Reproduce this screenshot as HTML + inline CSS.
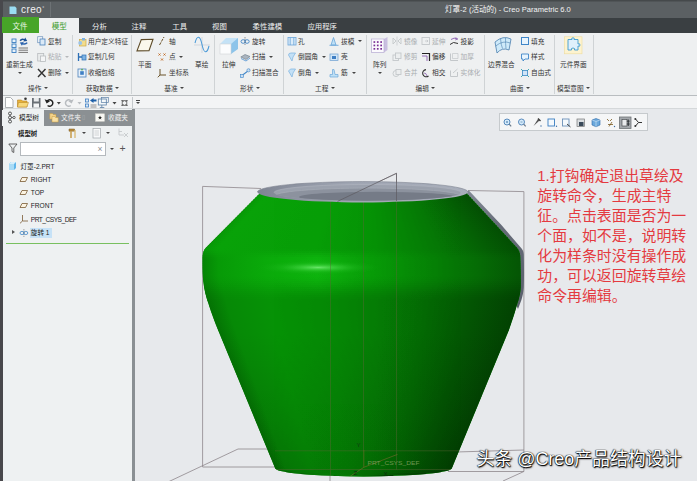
<!DOCTYPE html>
<html lang="zh"><head><meta charset="utf-8"><title>灯罩-2 - Creo Parametric 6.0</title>
<style>
html,body{margin:0;padding:0;}
body{width:697px;height:481px;overflow:hidden;background:#e7e9ec;font-family:"Liberation Sans","Noto Sans CJK SC",sans-serif;}
#app{position:relative;width:697px;height:481px;overflow:hidden;background:#e7e9ec;}
#app div,#app span,#app i,#app svg{position:absolute;display:block;}
.t{white-space:nowrap;font-family:"Liberation Sans","Noto Sans CJK SC",sans-serif;}
.ar{width:0;height:0;border-style:solid;border-color:transparent;}
</style></head><body><div id="app">
<div style="left:0px;top:0px;width:697px;height:481px;background:#e7e9ec;"></div>
<div style="left:0px;top:0px;width:697px;height:18px;background:linear-gradient(#45494b 0,#45494b 1px,#5b6063 2px,#5b6063 100%);"></div>
<div style="left:50px;top:2px;width:1px;height:15px;background:#6d7275;"></div>
<div style="left:0px;top:17.5px;width:697px;height:15.5px;background:#3a3f42;"></div>
<div style="left:0px;top:33px;width:697px;height:62px;background:#eef0f1;"></div>
<div style="left:0px;top:95px;width:697px;height:1px;background:#b9bdc0;"></div>
<div style="left:0px;top:96px;width:697px;height:13px;background:#f3f4f5;"></div>
<div style="left:0px;top:108px;width:697px;height:1px;background:#d5d8da;"></div>
<div style="left:0px;top:109px;width:133px;height:372px;background:#eef1f2;"></div>
<div style="left:132.2px;top:109px;width:2.5px;height:372px;background:#8a8f93;"></div>
<div style="left:0px;top:0px;width:2.5px;height:481px;background:#48484c;"></div>
<svg style="left:8px;top:5px" width="10" height="10" viewBox="0 0 10 10"><path d="M1.5 1.5 L7 1.5 L8.5 3 L8.5 9 L1.5 9 Z" fill="#9adcf2"/></svg>
<span class="t " style="left:21px;top:2.9px;font-size:10px;line-height:13.0px;color:#f2f2f2;letter-spacing:0.4px">creo</span>
<span class="t " style="left:42.3px;top:4.5px;font-size:5px;line-height:6.5px;color:#e0e0e0;">°</span>
<span class="t " style="left:445px;top:4.9px;font-size:7.55px;line-height:9.8px;color:#f4f4f4;">灯罩-2 (活动的) - Creo Parametric 6.0</span>
<div style="left:2px;top:17px;width:37px;height:16px;background:#47a528;"></div>
<div style="left:39px;top:18px;width:40px;height:15px;background:#eef0f1;"></div>
<span class="t " style="left:12.5px;top:22.0px;font-size:7.5px;line-height:9.8px;color:#eaf6e4;">文件</span>
<span class="t " style="left:51.7px;top:22.0px;font-size:7.5px;line-height:9.8px;color:#3c9a2a;">模型</span>
<span class="t " style="left:92px;top:22.1px;font-size:7.4px;line-height:9.6px;color:#f0f0f0;">分析</span>
<span class="t " style="left:131.6px;top:22.1px;font-size:7.4px;line-height:9.6px;color:#f0f0f0;">注释</span>
<span class="t " style="left:172.3px;top:22.1px;font-size:7.4px;line-height:9.6px;color:#f0f0f0;">工具</span>
<span class="t " style="left:212px;top:22.1px;font-size:7.4px;line-height:9.6px;color:#f0f0f0;">视图</span>
<span class="t " style="left:252.6px;top:22.1px;font-size:7.4px;line-height:9.6px;color:#f0f0f0;">柔性建模</span>
<span class="t " style="left:307.4px;top:22.1px;font-size:7.4px;line-height:9.6px;color:#f0f0f0;">应用程序</span>
<div style="left:72px;top:35px;width:1px;height:59px;background:#cfd3d5;"></div>
<div style="left:131px;top:35px;width:1px;height:59px;background:#cfd3d5;"></div>
<div style="left:214px;top:35px;width:1px;height:59px;background:#cfd3d5;"></div>
<div style="left:283px;top:35px;width:1px;height:59px;background:#cfd3d5;"></div>
<div style="left:366px;top:35px;width:1px;height:59px;background:#cfd3d5;"></div>
<div style="left:484px;top:35px;width:1px;height:59px;background:#cfd3d5;"></div>
<div style="left:554px;top:35px;width:1px;height:59px;background:#cfd3d5;"></div>
<div style="left:593px;top:35px;width:1px;height:59px;background:#cfd3d5;"></div>
<svg style="left:10.5px;top:36.5px" width="20" height="17" viewBox="0 0 20 17"><rect x="1" y="2" width="4" height="3.5" fill="#e8f3fb" stroke="#3a7dc0" stroke-width="0.9"/><rect x="1" y="7" width="4" height="3.5" fill="#e8f3fb" stroke="#3a7dc0" stroke-width="0.9"/><rect x="1" y="12" width="4" height="3.5" fill="#e8f3fb" stroke="#3a7dc0" stroke-width="0.9"/><path d="M8.5 3.2 Q10.5 0.8 13.5 2 L14.2 0.6 L16.2 4 L12.3 4.6 L13 3.2 Q11 2.6 9.8 4.2Z" fill="#1a4f94"/><path d="M16.8 6 Q14.8 8.6 11.6 7.4 L10.9 8.8 L8.8 5.4 L12.8 4.9 L12.1 6.2 Q14.2 6.8 15.5 5.2Z" fill="#2a63ae"/><path d="M7.5 11 H17 M7.5 13.2 H17 M7.5 15.4 H17" stroke="#666" stroke-width="0.9"/></svg>
<span class="t " style="left:6px;top:61.0px;font-size:6.7px;line-height:8.7px;color:#333;">重新生成</span>
<i class="ar" style="left:17.5px;top:72px;border-top-color:#444;border-width:2.5px 2.0px 0 2.0px"></i>
<svg style="left:37px;top:36px" width="9" height="10" viewBox="0 0 9 10"><rect x="0.7" y="0.7" width="5" height="6" fill="#f4f8fb" stroke="#7a9cc0" stroke-width="0.8"/><rect x="3" y="3" width="5" height="6" fill="#dbe9f6" stroke="#4d82bb" stroke-width="0.8"/></svg>
<span class="t " style="left:48px;top:37.7px;font-size:6.7px;line-height:8.7px;color:#333;">复制</span>
<svg style="left:37px;top:52px" width="9" height="10" viewBox="0 0 9 10"><rect x="0.7" y="1.5" width="6" height="7.5" fill="#e9ebec" stroke="#b8bcbf" stroke-width="0.8"/><rect x="3.5" y="4" width="5" height="5.5" fill="#f4f5f6" stroke="#b8bcbf" stroke-width="0.8"/></svg>
<span class="t " style="left:48px;top:53.4px;font-size:6.7px;line-height:8.7px;color:#a9adb0;">粘贴</span>
<i class="ar" style="left:64.5px;top:56px;border-top-color:#b5b8bb;border-width:2.5px 2.0px 0 2.0px"></i>
<svg style="left:37px;top:67.5px" width="10" height="10" viewBox="0 0 10 10"><path d="M1 1 L8.5 9 M8.5 1 L1 9" stroke="#333" stroke-width="1.4" fill="none"/></svg>
<span class="t " style="left:48px;top:69.0px;font-size:6.7px;line-height:8.7px;color:#333;">删除</span>
<i class="ar" style="left:64.5px;top:71.6px;border-top-color:#444;border-width:2.5px 2.0px 0 2.0px"></i>
<span class="t " style="left:28px;top:84.5px;font-size:6.7px;line-height:8.7px;color:#333;">操作</span>
<i class="ar" style="left:43.9px;top:87px;border-top-color:#444;border-width:2.5px 2.0px 0 2.0px"></i>
<svg style="left:77.3px;top:36.8px" width="10" height="10" viewBox="0 0 10 10"><rect x="2.5" y="2.5" width="6.5" height="6.5" fill="#f3dc8c" stroke="#c9aa4c" stroke-width="0.7"/><circle cx="3.2" cy="6" r="2" fill="#9cc4ea"/><rect x="5" y="1" width="3" height="2.5" fill="#7fb2e2"/></svg>
<span class="t " style="left:88px;top:37.7px;font-size:6.7px;line-height:8.7px;color:#333;">用户定义特征</span>
<svg style="left:77.3px;top:52px" width="10" height="10" viewBox="0 0 10 10"><path d="M1.5 1 V9 M1.5 5 H5" stroke="#2d6fb5" stroke-width="1.3" fill="none"/><rect x="5" y="3" width="4" height="5" fill="#7fb2e2" stroke="#2d6fb5" stroke-width="0.7"/></svg>
<span class="t " style="left:88px;top:53.4px;font-size:6.7px;line-height:8.7px;color:#333;">复制几何</span>
<svg style="left:77.3px;top:67.5px" width="10" height="10" viewBox="0 0 10 10"><rect x="1" y="1" width="8" height="8" fill="#e6f0fa" stroke="#4d82bb" stroke-width="0.8"/><rect x="3.2" y="3.2" width="3.6" height="3.6" fill="#3f7fc4"/><path d="M5 0.5 L6.2 2.2 H3.8Z" fill="#46a52a"/></svg>
<span class="t " style="left:88px;top:69.0px;font-size:6.7px;line-height:8.7px;color:#333;">收缩包络</span>
<span class="t " style="left:86px;top:84.5px;font-size:6.7px;line-height:8.7px;color:#333;">获取数据</span>
<i class="ar" style="left:115.3px;top:87px;border-top-color:#444;border-width:2.5px 2.0px 0 2.0px"></i>
<svg style="left:134px;top:36px" width="21" height="18" viewBox="0 0 21 18"><path d="M7.3 3.6 L19 3.3 L15 14.6 L3 14.9 Z" fill="#fbf8ec" stroke="#5e4c2a" stroke-width="1.1"/></svg>
<span class="t " style="left:138px;top:61.0px;font-size:6.7px;line-height:8.7px;color:#333;">平面</span>
<svg style="left:158px;top:36px" width="8" height="10" viewBox="0 0 8 10"><path d="M1.5 9 L6 1" stroke="#6a5228" stroke-width="1" stroke-dasharray="3 1"/></svg>
<span class="t " style="left:169px;top:37.7px;font-size:6.7px;line-height:8.7px;color:#333;">轴</span>
<svg style="left:157px;top:52px" width="10" height="10" viewBox="0 0 10 10"><path d="M1.5 1.5 L3.5 3.5 M3.5 1.5 L1.5 3.5 M6.5 1.5 L8.5 3.5 M8.5 1.5 L6.5 3.5 M4 6.5 L6 8.5 M6 6.5 L4 8.5" stroke="#c0641a" stroke-width="0.9"/></svg>
<span class="t " style="left:169px;top:53.4px;font-size:6.7px;line-height:8.7px;color:#333;">点</span>
<i class="ar" style="left:179.0px;top:56px;border-top-color:#444;border-width:2.5px 2.0px 0 2.0px"></i>
<svg style="left:157px;top:67.5px" width="10" height="10" viewBox="0 0 10 10"><path d="M3 1 V7 H9 M3 7 L0.8 9.3" stroke="#6a5228" stroke-width="1" fill="none"/></svg>
<span class="t " style="left:169px;top:69.0px;font-size:6.7px;line-height:8.7px;color:#333;">坐标系</span>
<svg style="left:193px;top:36px" width="18" height="18" viewBox="0 0 18 18"><path d="M1 9 H17 M9 1 V17" stroke="#c5cdd6" stroke-width="0.7"/><path d="M2 7 C4 -1,7 -1,9 8.5 S14 18,16 10" fill="none" stroke="#4a9ad8" stroke-width="1.05"/></svg>
<span class="t " style="left:195px;top:61.0px;font-size:6.7px;line-height:8.7px;color:#333;">草绘</span>
<span class="t " style="left:164.3px;top:84.5px;font-size:6.7px;line-height:8.7px;color:#333;">基准</span>
<i class="ar" style="left:180.20000000000002px;top:87px;border-top-color:#444;border-width:2.5px 2.0px 0 2.0px"></i>
<svg style="left:219px;top:36px" width="20" height="19" viewBox="0 0 20 19"><path d="M7 2 H19 V13 L12 18 V8 Z" fill="#8cc4ea"/><path d="M7 2 H19 L12 8 H1 Z" fill="#c4e2f6"/><rect x="1" y="8" width="11" height="10" fill="#fbfcfd" stroke="#d0d4d8" stroke-width="0.6"/></svg>
<span class="t " style="left:222px;top:61.0px;font-size:6.7px;line-height:8.7px;color:#333;">拉伸</span>
<svg style="left:240px;top:36px" width="10" height="10" viewBox="0 0 10 10"><ellipse cx="3.2" cy="5.5" rx="2.2" ry="1.8" fill="none" stroke="#3f86c8" stroke-width="0.9"/><ellipse cx="7" cy="5.5" rx="2.2" ry="1.8" fill="none" stroke="#3f86c8" stroke-width="0.9"/><path d="M5 1 V9" stroke="#555" stroke-width="0.6" stroke-dasharray="1.5 0.8"/></svg>
<span class="t " style="left:252px;top:37.7px;font-size:6.7px;line-height:8.7px;color:#333;">旋转</span>
<svg style="left:240px;top:52px" width="11" height="10" viewBox="0 0 11 10"><path d="M0.8 5 L5 2.5 L10 4.5 L6 7.5 Z" fill="#a9b4bf" stroke="#6c7884" stroke-width="0.6"/><path d="M1 6.5 L6 9 L10 6" fill="none" stroke="#5d9bd6" stroke-width="0.9"/></svg>
<span class="t " style="left:252px;top:53.4px;font-size:6.7px;line-height:8.7px;color:#333;">扫描</span>
<i class="ar" style="left:269.0px;top:56px;border-top-color:#444;border-width:2.5px 2.0px 0 2.0px"></i>
<svg style="left:240px;top:67.5px" width="11" height="10" viewBox="0 0 11 10"><path d="M1 9 C3 5,6 6,9.5 1" fill="none" stroke="#3f86c8" stroke-width="1.2"/><rect x="0.6" y="6.5" width="3" height="3" fill="#c9def2" stroke="#3f86c8" stroke-width="0.6"/><circle cx="8.5" cy="2.3" r="1.6" fill="#c9def2" stroke="#3f86c8" stroke-width="0.6"/></svg>
<span class="t " style="left:252px;top:69.0px;font-size:6.7px;line-height:8.7px;color:#333;">扫描混合</span>
<span class="t " style="left:240px;top:84.5px;font-size:6.7px;line-height:8.7px;color:#333;">形状</span>
<i class="ar" style="left:255.89999999999998px;top:87px;border-top-color:#444;border-width:2.5px 2.0px 0 2.0px"></i>
<svg style="left:287px;top:36px" width="10" height="10" viewBox="0 0 10 10"><rect x="1" y="1.5" width="8" height="7.5" fill="#dcecf9" stroke="#6ba6d9" stroke-width="0.8"/><path d="M3.2 1.5 V9 M6.8 1.5 V9" stroke="#6ba6d9" stroke-width="0.8"/></svg>
<span class="t " style="left:298px;top:37.7px;font-size:6.7px;line-height:8.7px;color:#333;">孔</span>
<svg style="left:287px;top:52px" width="10" height="10" viewBox="0 0 10 10"><path d="M1.5 3 Q1.5 1,4 1 H8.5 L6 5 L5 9 Z" fill="#c3e0f6" stroke="#7ab2e0" stroke-width="0.7"/></svg>
<span class="t " style="left:298px;top:53.4px;font-size:6.7px;line-height:8.7px;color:#333;">倒圆角</span>
<i class="ar" style="left:321.5px;top:56px;border-top-color:#444;border-width:2.5px 2.0px 0 2.0px"></i>
<svg style="left:287px;top:67.5px" width="10" height="10" viewBox="0 0 10 10"><path d="M1.5 3 L3.5 1 H8.5 L6 5 L5 9 Z" fill="#c3e0f6" stroke="#7ab2e0" stroke-width="0.7"/></svg>
<span class="t " style="left:298px;top:69.0px;font-size:6.7px;line-height:8.7px;color:#333;">倒角</span>
<i class="ar" style="left:315.0px;top:71.6px;border-top-color:#444;border-width:2.5px 2.0px 0 2.0px"></i>
<svg style="left:329px;top:36px" width="10" height="10" viewBox="0 0 10 10"><path d="M2 9 L4.5 1.5 L7 9 Z" fill="#bfe0f6" stroke="#6ba6d9" stroke-width="0.8"/><path d="M0.5 9.3 H9.5" stroke="#6ba6d9" stroke-width="0.9"/></svg>
<span class="t " style="left:341px;top:37.7px;font-size:6.7px;line-height:8.7px;color:#333;">拔模</span>
<i class="ar" style="left:358.0px;top:40px;border-top-color:#444;border-width:2.5px 2.0px 0 2.0px"></i>
<svg style="left:329px;top:52px" width="10" height="10" viewBox="0 0 10 10"><rect x="1" y="2" width="8" height="6.5" fill="#d3e6f6" stroke="#6b9fd0" stroke-width="0.7"/><rect x="3" y="4" width="4" height="3" fill="#3f7fc4"/></svg>
<span class="t " style="left:341px;top:53.4px;font-size:6.7px;line-height:8.7px;color:#333;">壳</span>
<svg style="left:329px;top:67.5px" width="10" height="10" viewBox="0 0 10 10"><path d="M1 9 H9 V6.5 H6 L5 1.5 H3.5 V6.5 H1 Z" fill="#bfe0f6" stroke="#6ba6d9" stroke-width="0.7"/></svg>
<span class="t " style="left:341px;top:69.0px;font-size:6.7px;line-height:8.7px;color:#333;">筋</span>
<i class="ar" style="left:352.0px;top:71.6px;border-top-color:#444;border-width:2.5px 2.0px 0 2.0px"></i>
<span class="t " style="left:315px;top:84.5px;font-size:6.7px;line-height:8.7px;color:#333;">工程</span>
<i class="ar" style="left:330.9px;top:87px;border-top-color:#444;border-width:2.5px 2.0px 0 2.0px"></i>
<svg style="left:370px;top:36px" width="19" height="19" viewBox="0 0 19 19"><path d="M1.5 3 H14 L17.5 1 V14 L14 16.5 H1.5 Z" fill="#c9bfe0"/><rect x="1.5" y="3" width="12.5" height="13.5" fill="#fbfafd" stroke="#b9aed3" stroke-width="0.7"/><g transform="translate(0.3,2)"><rect x="3.2" y="3.2" width="1.7" height="1.7" fill="#7a2f95"/><rect x="3.2" y="6.6" width="1.7" height="1.7" fill="#7a2f95"/><rect x="3.2" y="10.0" width="1.7" height="1.7" fill="#7a2f95"/><rect x="6.6" y="3.2" width="1.7" height="1.7" fill="#7a2f95"/><rect x="6.6" y="6.6" width="1.7" height="1.7" fill="#7a2f95"/><rect x="6.6" y="10.0" width="1.7" height="1.7" fill="#7a2f95"/><rect x="10.0" y="3.2" width="1.7" height="1.7" fill="#7a2f95"/><rect x="10.0" y="6.6" width="1.7" height="1.7" fill="#7a2f95"/><rect x="10.0" y="10.0" width="1.7" height="1.7" fill="#7a2f95"/></g></svg>
<span class="t " style="left:373px;top:61.0px;font-size:6.7px;line-height:8.7px;color:#333;">阵列</span>
<i class="ar" style="left:377.5px;top:72px;border-top-color:#444;border-width:2.5px 2.0px 0 2.0px"></i>
<svg style="left:392px;top:36px" width="10" height="10" viewBox="0 0 10 10"><path d="M1 2 L4 5 L1 8 Z M9 2 L6 5 L9 8 Z" fill="none" stroke="#c3c7ca" stroke-width="0.9"/><path d="M5 0.5 V9.5" stroke="#c3c7ca" stroke-width="0.7"/></svg>
<span class="t " style="left:404px;top:37.7px;font-size:6.7px;line-height:8.7px;color:#a9adb0;">镜像</span>
<svg style="left:392px;top:52px" width="10" height="10" viewBox="0 0 10 10"><rect x="1" y="3" width="5.5" height="5.5" fill="none" stroke="#c3c7ca" stroke-width="0.9"/><rect x="3.5" y="1" width="5.5" height="5.5" fill="#eceeef" stroke="#c3c7ca" stroke-width="0.9"/></svg>
<span class="t " style="left:404px;top:53.4px;font-size:6.7px;line-height:8.7px;color:#a9adb0;">修剪</span>
<svg style="left:392px;top:67.5px" width="10" height="10" viewBox="0 0 10 10"><circle cx="4" cy="5.5" r="3" fill="none" stroke="#c3c7ca" stroke-width="0.9"/><rect x="4" y="1.5" width="5" height="5" fill="#eceeef" stroke="#c3c7ca" stroke-width="0.9"/></svg>
<span class="t " style="left:404px;top:69.0px;font-size:6.7px;line-height:8.7px;color:#a9adb0;">合并</span>
<svg style="left:421px;top:36px" width="10" height="10" viewBox="0 0 10 10"><rect x="1" y="1.5" width="7.5" height="7" fill="none" stroke="#c3c7ca" stroke-width="0.9"/><path d="M4 5 H7 M5.8 3.8 L7 5 L5.8 6.2" stroke="#c3c7ca" stroke-width="0.8" fill="none"/></svg>
<span class="t " style="left:432px;top:37.7px;font-size:6.7px;line-height:8.7px;color:#a9adb0;">延伸</span>
<svg style="left:421px;top:52px" width="10" height="10" viewBox="0 0 10 10"><path d="M1 1.5 H8.5 V9" fill="none" stroke="#222" stroke-width="1.2"/><path d="M1 4 H6 V9" fill="none" stroke="#8a5fb0" stroke-width="0.9"/></svg>
<span class="t " style="left:432px;top:53.4px;font-size:6.7px;line-height:8.7px;color:#333;">偏移</span>
<svg style="left:421px;top:67.5px" width="10" height="10" viewBox="0 0 10 10"><path d="M7.5 8 A3.6 3.6 0 1 1 5 1.6" fill="none" stroke="#333" stroke-width="1.1"/><path d="M3 5 Q5.5 5 6 8" fill="none" stroke="#8a5fb0" stroke-width="0.8"/></svg>
<span class="t " style="left:432px;top:69.0px;font-size:6.7px;line-height:8.7px;color:#333;">相交</span>
<svg style="left:449px;top:36px" width="10" height="10" viewBox="0 0 10 10"><path d="M1 8.5 Q4 5 9 7.5" fill="none" stroke="#333" stroke-width="1"/><path d="M2 3.5 Q5 1 8.5 3" fill="none" stroke="#8a5fb0" stroke-width="0.9"/><path d="M6.5 1.5 L8.7 3 L6.2 4" fill="none" stroke="#8a5fb0" stroke-width="0.8"/></svg>
<span class="t " style="left:460.5px;top:37.7px;font-size:6.7px;line-height:8.7px;color:#333;">投影</span>
<svg style="left:449px;top:52px" width="10" height="10" viewBox="0 0 10 10"><path d="M1.5 1.5 V8.5 H9" fill="none" stroke="#c3c7ca" stroke-width="1"/><path d="M3.5 1.5 H9 V6.5 H3.5Z" fill="none" stroke="#c3c7ca" stroke-width="0.7"/></svg>
<span class="t " style="left:460.5px;top:53.4px;font-size:6.7px;line-height:8.7px;color:#a9adb0;">加厚</span>
<svg style="left:449px;top:67.5px" width="10" height="10" viewBox="0 0 10 10"><path d="M1.5 2.5 V8.5 H8.5 V4 " fill="none" stroke="#c3c7ca" stroke-width="1"/><path d="M4 5 L8.5 1" stroke="#c3c7ca" stroke-width="0.9"/></svg>
<span class="t " style="left:460.5px;top:69.0px;font-size:6.7px;line-height:8.7px;color:#a9adb0;">实体化</span>
<span class="t " style="left:415.5px;top:84.8px;font-size:6.7px;line-height:8.7px;color:#333;">编辑</span>
<i class="ar" style="left:431.4px;top:87.3px;border-top-color:#444;border-width:2.5px 2.0px 0 2.0px"></i>
<svg style="left:493px;top:36px" width="20" height="18" viewBox="0 0 20 18"><path d="M2 6 Q10 -1 18 3 L16 14 Q9 11 4 17 Z" fill="#cfeaf9" stroke="#4a7fae" stroke-width="0.8"/><path d="M7.5 2.6 Q8 9 9.5 12.5 M12.5 1.9 Q12.5 8 13 12.7 M2.7 10 Q10 4 17.3 7" fill="none" stroke="#4a7fae" stroke-width="0.6"/></svg>
<span class="t " style="left:488px;top:61.0px;font-size:6.7px;line-height:8.7px;color:#333;">边界混合</span>
<svg style="left:520px;top:36px" width="10" height="10" viewBox="0 0 10 10"><rect x="1.5" y="1.5" width="7" height="7" fill="#e8f4fd" stroke="#3f86c8" stroke-width="1"/></svg>
<span class="t " style="left:531px;top:37.7px;font-size:6.7px;line-height:8.7px;color:#333;">填充</span>
<svg style="left:520px;top:52px" width="10" height="10" viewBox="0 0 10 10"><path d="M1.5 2 H8.5 V7 H5 L3 9 V7 H1.5Z" fill="#e8f4fd" stroke="#3f86c8" stroke-width="0.9"/></svg>
<span class="t " style="left:531px;top:53.4px;font-size:6.7px;line-height:8.7px;color:#333;">样式</span>
<svg style="left:520px;top:67.5px" width="10" height="10" viewBox="0 0 10 10"><rect x="2.5" y="2.5" width="5" height="5" fill="#cfe5f7" stroke="#3f86c8" stroke-width="0.8"/><path d="M1 1 L3 3 M9 1 L7 3 M1 9 L3 7 M9 9 L7 7" stroke="#2f9fb0" stroke-width="0.9"/></svg>
<span class="t " style="left:531px;top:69.0px;font-size:6.7px;line-height:8.7px;color:#333;">自由式</span>
<span class="t " style="left:510px;top:84.8px;font-size:6.7px;line-height:8.7px;color:#333;">曲面</span>
<i class="ar" style="left:525.9px;top:87.3px;border-top-color:#444;border-width:2.5px 2.0px 0 2.0px"></i>
<svg style="left:564px;top:36px" width="19" height="19" viewBox="0 0 19 19"><rect x="0.5" y="0.8" width="17.5" height="17" fill="#fdf3cf" stroke="#efdc9c" stroke-width="0.6"/><path d="M4 3.5 H8 Q7 1.8 9 1.8 Q11 1.8 10 3.5 H14 V8 Q16 7 16 9 Q16 11 14 10 V14 H10.5 Q11.3 12 9 12 Q6.8 12 7.5 14 H4 Z" fill="#dff0fb" stroke="#3d9ad0" stroke-width="0.9"/></svg>
<span class="t " style="left:560px;top:61.0px;font-size:6.7px;line-height:8.7px;color:#333;">元件界面</span>
<span class="t " style="left:557px;top:84.8px;font-size:6.7px;line-height:8.7px;color:#333;">模型意图</span>
<i class="ar" style="left:586.3px;top:87.3px;border-top-color:#444;border-width:2.5px 2.0px 0 2.0px"></i>
<svg style="left:4px;top:96px" width="130" height="13" viewBox="0 0 130 13"><path d="M1.5 1.5 H6.5 L9 4 V11.5 H1.5Z" fill="#fff" stroke="#9a9ea2" stroke-width="0.8"/><path d="M13.5 4 H17.5 L18.5 5 H23 V11 H13.5Z" fill="#e9b23c" stroke="#b5821e" stroke-width="0.6"/><path d="M14.5 6.5 H24.5 L22.8 11 H13.5Z" fill="#f7d77a" stroke="#b5821e" stroke-width="0.5"/><circle cx="21.5" cy="2.8" r="1.3" fill="#333"/><path d="M28 2 H36.5 V11.5 H28Z" fill="#6a7076"/><rect x="29.8" y="2" width="5" height="3.5" fill="#e8eaec"/><rect x="29.5" y="7.5" width="5.5" height="4" fill="#f4f5f6"/><g transform="translate(1.6 0)"><path d="M42 9.5 A3.2 3.2 0 1 0 41.2 5.5" fill="none" stroke="#222" stroke-width="1.5"/><path d="M39 3.2 L41 7.5 L44.4 5.2Z" fill="#222"/></g><g transform="translate(1.3 0)"><path d="M51.5 6 L55.5 6 L53.5 8.6Z" fill="#444"/></g><g transform="translate(1.7 0)"><path d="M65 9.5 A3.2 3.2 0 1 1 65.8 5.5" fill="none" stroke="#b8bcc0" stroke-width="1.5"/><path d="M68 3.2 L66 7.5 L62.6 5.2Z" fill="#b8bcc0"/></g><g transform="translate(1.0 0)"><path d="M72.5 6 L76.5 6 L74.5 8.6Z" fill="#b8bcc0"/></g><rect x="81.5" y="3" width="3" height="3" fill="#dbe9f6" stroke="#3f7fc4" stroke-width="0.8"/><rect x="81.5" y="8" width="3" height="3" fill="#dbe9f6" stroke="#3f7fc4" stroke-width="0.8"/><path d="M86 4.5 L89.5 2 V3.5 H92.5 V5.5 H89.5 V7Z" fill="#1c5fa8"/><path d="M86.5 9 H92.5 M86.5 11 H92.5" stroke="#777" stroke-width="0.8"/><g transform="translate(-3.2 0)"><rect x="97.5" y="3" width="8" height="6" fill="#f4f8fb" stroke="#5a7fa6" stroke-width="0.8"/><rect x="100.5" y="1.5" width="7" height="5" fill="none" stroke="#5a7fa6" stroke-width="0.7"/><path d="M101 9 V11.5 M99 11.5 H103.5" stroke="#5a7fa6" stroke-width="0.8"/></g><path d="M108.5 6 L112.5 6 L110.5 8.6Z" fill="#444"/><path d="M117.5 4 L119.5 6 M123.5 4 L121.5 6 M117.5 10 L119.5 8 M123.5 10 L121.5 8" stroke="#555" stroke-width="1"/><rect x="118.2" y="4.7" width="4.6" height="4.6" fill="none" stroke="#555" stroke-width="0.8"/></svg>
<div style="left:132px;top:97px;width:1px;height:11px;background:#c5c9cc;"></div>
<i class="ar" style="left:135.8px;top:101.5px;border-top-color:#444;border-width:2.7px 2.2px 0 2.2px"></i>
<div style="left:135.8px;top:100.3px;width:4.4px;height:0.9px;background:#444;"></div>
<div style="left:2px;top:110px;width:42px;height:16px;background:#eef1f2;"></div>
<div style="left:44px;top:110px;width:90.4px;height:16px;background:#8b9093;"></div>
<svg style="left:7px;top:111px" width="9" height="13" viewBox="0 0 9 13"><circle cx="3" cy="2.5" r="1.5" fill="none" stroke="#333" stroke-width="0.8"/><circle cx="3" cy="6.5" r="1.5" fill="none" stroke="#333" stroke-width="0.8"/><circle cx="3" cy="10.5" r="1.5" fill="none" stroke="#333" stroke-width="0.8"/><circle cx="7" cy="6.5" r="1.2" fill="none" stroke="#333" stroke-width="0.7"/><path d="M3 4 V5 M3 8 V9 M4.5 6.5 H5.8" stroke="#333" stroke-width="0.7"/></svg>
<span class="t " style="left:19px;top:114.0px;font-size:6.7px;line-height:8.7px;color:#222;">模型树</span>
<svg style="left:49px;top:112px" width="10" height="11" viewBox="0 0 10 11"><path d="M0.8 1.5 H3.5 L4.3 2.5 H7 V7 H0.8Z" fill="#f3d28a" stroke="#c79a3c" stroke-width="0.5"/><path d="M3 4.5 H5.7 L6.5 5.5 H9.2 V10 H3Z" fill="#f7dfa4" stroke="#c79a3c" stroke-width="0.5"/></svg>
<span class="t " style="left:61px;top:114.0px;font-size:6.7px;line-height:8.7px;color:#f2f2f2;">文件夹</span>
<span class="t" style="left:82px;top:113px;font-size:6px;line-height:8px;color:#a9adb0">▯</span>
<svg style="left:95px;top:113px" width="10" height="9" viewBox="0 0 10 9"><rect x="0.5" y="0.8" width="9" height="7.5" fill="#f8f8f4" stroke="#d8d8d0" stroke-width="0.5"/><path d="M5 2.6 L5.6 4 L7 4.1 L5.9 5 L6.3 6.4 L5 5.6 L3.7 6.4 L4.1 5 L3 4.1 L4.4 4Z" fill="#222"/></svg>
<span class="t " style="left:108px;top:114.0px;font-size:6.7px;line-height:8.7px;color:#f2f2f2;">收藏夹</span>
<span class="t " style="left:18px;top:129.7px;font-size:6.4px;line-height:8.3px;color:#222;font-weight:bold">模型树</span>
<svg style="left:67px;top:127px" width="11" height="12" viewBox="0 0 11 12"><path d="M2 2 H7.5 V4.2 H2Z" fill="#b98a3a" stroke="#7a5a20" stroke-width="0.5"/><path d="M4 4 V11" stroke="#c9a050" stroke-width="1.6"/><path d="M8 3 V11" stroke="#d8b870" stroke-width="1.3"/></svg>
<i class="ar" style="left:82.0px;top:132px;border-top-color:#444;border-width:2.5px 2.0px 0 2.0px"></i>
<svg style="left:92px;top:127px" width="10" height="12" viewBox="0 0 10 12"><rect x="1" y="1.5" width="7.5" height="9.5" fill="#f8f9fa" stroke="#a2a7ab" stroke-width="0.7"/><path d="M2.5 4 H7 M2.5 6 H7 M2.5 8 H7" stroke="#b5b9bc" stroke-width="0.6"/></svg>
<i class="ar" style="left:105.5px;top:132px;border-top-color:#444;border-width:2.5px 2.0px 0 2.0px"></i>
<svg style="left:116px;top:127px" width="13" height="12" viewBox="0 0 13 12"><path d="M3 1.5 V8 H8 M3 4.5 H6" fill="none" stroke="#c5c9cc" stroke-width="0.9"/><path d="M8 6 L12 10 M12 6 L8 10" stroke="#c5c9cc" stroke-width="0.9"/></svg>
<svg style="left:8px;top:143px" width="10" height="11" viewBox="0 0 10 11"><path d="M0.8 1 H9 L5.8 5 V9.5 L4 8.5 V5Z" fill="none" stroke="#444" stroke-width="0.8"/></svg>
<div style="left:19.5px;top:141.5px;width:86.7px;height:14.8px;background:#ffffff;box-sizing:border-box;border:1px solid #b4b9bd;"></div>
<span class="t " style="left:97.5px;top:143.8px;font-size:8.5px;line-height:11.1px;color:#8a8e92;">×</span>
<i class="ar" style="left:109.5px;top:148px;border-top-color:#444;border-width:2.5px 2.0px 0 2.0px"></i>
<span class="t " style="left:119.6px;top:142.3px;font-size:10.5px;line-height:13.7px;color:#555;">+</span>
<svg style="left:8px;top:161px" width="9" height="10" viewBox="0 0 9 10"><path d="M1 3 L3 1 H8 V7 L6 9 H1Z" fill="#5fb5ea"/><path d="M1 3 H6 V9 H1Z" fill="#a9dbf6"/><path d="M1 3 L3 1 H8 L6 3Z" fill="#d5eefb"/></svg>
<span class="t " style="left:20.5px;top:162.5px;font-size:6.6px;line-height:8.6px;color:#222;">灯罩-2.PRT</span>
<svg style="left:19px;top:175.7px" width="10" height="8" viewBox="0 0 10 8"><path d="M3 1.5 H8.5 L6.5 5.5 H1Z" fill="#fbf3e2" stroke="#7a5a34" stroke-width="0.8"/></svg>
<span class="t " style="left:30.8px;top:176.0px;font-size:6.6px;line-height:8.6px;color:#222;">RIGHT</span>
<svg style="left:19px;top:188.79999999999998px" width="10" height="8" viewBox="0 0 10 8"><path d="M3 1.5 H8.5 L6.5 5.5 H1Z" fill="#fbf3e2" stroke="#7a5a34" stroke-width="0.8"/></svg>
<span class="t " style="left:30.8px;top:189.1px;font-size:6.6px;line-height:8.6px;color:#222;">TOP</span>
<svg style="left:19px;top:201.89999999999998px" width="10" height="8" viewBox="0 0 10 8"><path d="M3 1.5 H8.5 L6.5 5.5 H1Z" fill="#fbf3e2" stroke="#7a5a34" stroke-width="0.8"/></svg>
<span class="t " style="left:30.8px;top:202.2px;font-size:6.6px;line-height:8.6px;color:#222;">FRONT</span>
<svg style="left:19px;top:214px" width="10" height="10" viewBox="0 0 10 10"><path d="M3.5 1 V7 H9 M3.5 7 L1 9.3" stroke="#7a5a34" stroke-width="0.8" fill="none"/></svg>
<span class="t " style="left:30.8px;top:215.5px;font-size:6.6px;line-height:8.6px;color:#222;letter-spacing:-0.5px">PRT_CSYS_DEF</span>
<i class="ar" style="left:11.5px;top:230.3px;border-width:2.3px 0 2.3px 3px;border-left-color:#555"></i>
<svg style="left:19px;top:228px" width="10" height="10" viewBox="0 0 10 10"><ellipse cx="3" cy="5" rx="2" ry="1.6" fill="none" stroke="#3f86c8" stroke-width="0.8"/><ellipse cx="6.8" cy="5" rx="2" ry="1.6" fill="none" stroke="#3f86c8" stroke-width="0.8"/><path d="M4.9 1 V9" stroke="#555" stroke-width="0.5" stroke-dasharray="1.5 0.8"/></svg>
<div style="left:30px;top:228px;width:22px;height:9.5px;background:#c6e2f7;"></div>
<span class="t " style="left:30.8px;top:229.2px;font-size:6.6px;line-height:8.6px;color:#222;">旋转 1</span>
<div style="left:6px;top:242.5px;width:123px;height:1px;background:#78c060;"></div>
<div style="left:499.3px;top:113px;width:148.7px;height:17.6px;background:#f5f6f7;box-sizing:border-box;border:1px solid #c6cacd;"></div>
<svg style="left:500px;top:113.5px" width="148" height="17" viewBox="0 0 148 17"><circle cx="7" cy="8" r="3" fill="#d6ebfa" stroke="#4a7fb5" stroke-width="0.9"/><path d="M6 8 H8 M7 7 V9" stroke="#3a6ea5" stroke-width="0.6"/><path d="M9.2 10.2 L11.2 12.4" stroke="#6a7a8a" stroke-width="1.2"/><circle cx="21.5" cy="8" r="3" fill="#d6ebfa" stroke="#4a7fb5" stroke-width="0.9"/><path d="M20.5 8 H22.5" stroke="#3a6ea5" stroke-width="0.6"/><path d="M23.7 10.2 L25.7 12.4" stroke="#6a7a8a" stroke-width="1.2"/><path d="M33.5 12 L39.5 6.5 L38 5 Z" fill="#555"/><path d="M38 4.5 L40.5 7" stroke="#333" stroke-width="1.2"/><circle cx="41" cy="12" r="0.7" fill="#3a6ea5"/><rect x="48" y="5" width="6.5" height="7" fill="#f4f9fd" stroke="#3a7dc0" stroke-width="0.9"/><circle cx="56.5" cy="12.2" r="0.7" fill="#3a6ea5"/><rect x="62.5" y="5" width="6.5" height="7" fill="#f4f9fd" stroke="#6c90b8" stroke-width="0.9"/><path d="M67 10 L70.5 13" stroke="#444" stroke-width="1"/><rect x="77" y="5" width="7.5" height="7.5" fill="#d9dde0" stroke="#777" stroke-width="0.7"/><rect x="79" y="8" width="4.5" height="4" fill="#3a4a5a"/><path d="M92 6 L96 4.5 L100 6 V11 L96 12.8 L92 11Z" fill="#6aa8dc" stroke="#2d6aa8" stroke-width="0.6"/><path d="M92 6 L96 7.5 L100 6 M96 7.5 V12.8" stroke="#d5e8f7" stroke-width="0.6" fill="none"/><path d="M107 5 L109 7 M112 5 L110 7 M108 10.5 L113 10.5 M109 12.5 L112 8" stroke="#7a5a20" stroke-width="0.8"/><circle cx="114.5" cy="12.5" r="0.7" fill="#3a6ea5"/><rect x="119.5" y="3" width="11.5" height="11.5" fill="#a3a7ab" stroke="#6f7478" stroke-width="0.8"/><rect x="122" y="5.5" width="5" height="6.5" fill="#e8eaec" stroke="#3a3e42" stroke-width="0.6"/><path d="M128.3 5.5 V12 M126.8 7.2 H129.6 M126.8 10 H129.6" stroke="#2e3235" stroke-width="0.9"/><path d="M135.5 5 L138.5 8.5 L135.5 12 M138.5 8.5 H142" stroke="#333" stroke-width="1" fill="none"/><circle cx="135.3" cy="5" r="1" fill="#333"/><circle cx="135.3" cy="12" r="1" fill="#333"/></svg>
<svg style="left:133px;top:109px" width="564" height="372" viewBox="133 109 564 372">
<defs>
<linearGradient id="gA" x1="0" x2="1" y1="0" y2="0">
 <stop offset="0" stop-color="#079807"/><stop offset="0.04" stop-color="#08a208"/><stop offset="0.35" stop-color="#079e07"/>
 <stop offset="0.54" stop-color="#069206"/><stop offset="0.75" stop-color="#057805"/><stop offset="0.9" stop-color="#045e04"/><stop offset="1" stop-color="#034e03"/>
</linearGradient>
<linearGradient id="gB" x1="0" x2="1" y1="0" y2="0">
 <stop offset="0" stop-color="#058405"/><stop offset="0.05" stop-color="#079a07"/><stop offset="0.2" stop-color="#0aaa0a"/>
 <stop offset="0.36" stop-color="#0eb40e"/><stop offset="0.53" stop-color="#089c08"/><stop offset="0.73" stop-color="#068006"/><stop offset="0.87" stop-color="#056b05"/><stop offset="1" stop-color="#045504"/>
</linearGradient>
<linearGradient id="gC" x1="0" x2="1" y1="0" y2="0">
 <stop offset="0" stop-color="#047204"/><stop offset="0.06" stop-color="#068906"/><stop offset="0.2" stop-color="#069206"/>
 <stop offset="0.4" stop-color="#058805"/><stop offset="0.55" stop-color="#057c05"/><stop offset="0.7" stop-color="#046a04"/><stop offset="0.85" stop-color="#035503"/><stop offset="1" stop-color="#024202"/>
</linearGradient>
<linearGradient id="gv" x1="0" x2="0" y1="190" y2="476" gradientUnits="userSpaceOnUse">
 <stop offset="0" stop-color="#003000" stop-opacity="0"/><stop offset="0.5" stop-color="#003000" stop-opacity="0"/><stop offset="1" stop-color="#002400" stop-opacity="0.2"/>
</linearGradient>
<radialGradient id="hl" cx="318" cy="267.5" r="1" gradientUnits="userSpaceOnUse" gradientTransform="translate(318 267.5) scale(62 7.5) translate(-318 -267.5)">
 <stop offset="0" stop-color="#74ec74" stop-opacity="0.9"/><stop offset="0.25" stop-color="#4fdc4f" stop-opacity="0.65"/><stop offset="0.6" stop-color="#2cc42c" stop-opacity="0.28"/><stop offset="1" stop-color="#10a810" stop-opacity="0"/>
</radialGradient>
<radialGradient id="hl2" cx="330" cy="267" r="1" gradientUnits="userSpaceOnUse" gradientTransform="translate(330 267) scale(150 12) translate(-330 -267)">
 <stop offset="0" stop-color="#20c020" stop-opacity="0.6"/><stop offset="0.5" stop-color="#14b014" stop-opacity="0.3"/><stop offset="1" stop-color="#08a008" stop-opacity="0"/>
</radialGradient>
<linearGradient id="rim" x1="258" x2="468" y1="0" y2="0" gradientUnits="userSpaceOnUse">
 <stop offset="0" stop-color="#7f8593"/><stop offset="0.15" stop-color="#8b919f"/><stop offset="0.45" stop-color="#a0a6b3"/><stop offset="1" stop-color="#a8aebb"/>
</linearGradient>
<linearGradient id="edge" x1="0" x2="0" y1="190" y2="305" gradientUnits="userSpaceOnUse"><stop offset="0" stop-color="#868c99"/><stop offset="0.3" stop-color="#666c78"/><stop offset="1" stop-color="#5a606c"/></linearGradient>
<clipPath id="bodyclip"><path d="M260 193 L205.5 248 C204 249.5,202.8 252.5,202.6 256 C202.3 264,202.5 274,203.2 281 C204 289,206 297,208.7 304.6 C211 312,214.5 321.5,218 330 L275 468 A88.5 8.5 0 0 0 452 468 L509 330 C512.5 320,515 312,517 305 C519 299,520.5 293,520.8 287.5 C521 278,520.8 266,520.3 256.3 C520 252.5,518.8 249.8,517.3 248 L466.5 193 Z"/></clipPath>
<clipPath id="holeclip"><ellipse cx="367.5" cy="192.6" rx="93.5" ry="8.1"/></clipPath>
</defs>
<!-- back bounding lines -->
<g fill="none" stroke="#8e868b" stroke-width="0.8">
<path d="M202.6 467 V186.4 L261 188.5"/>
<path d="M468 190.5 L523.9 191.6 V471.5 L503 481"/>
<path d="M337.5 201.4 L396.5 173.3 V200"/>
<path d="M168 482 L238 449 H280"/>
<path d="M202.6 467 H280"/>
<path d="M456 452 L523.9 450"/>
<path d="M448 471.5 H523.9"/>
<path d="M330 476 V481"/>
</g>
<!-- grey shell edge on right -->
<path d="M468.6 190.2 L501.4 225 L521.8 248.8 C523 250.3,523.6 252.3,523.8 254.5 C524.1 266,524.1 278,523.8 287.5 C523.5 292,522.6 296,521.4 300 L518 309 L514 300 L514 246 L466 193 Z" fill="url(#edge)"/>
<!-- body -->
<path d="M260 193 L205.5 248 C204 249.5,202.8 252.5,202.6 256 C202.3 264,202.5 274,203.2 281 C204 289,206 297,208.7 304.6 C211 312,214.5 321.5,218 330 L275 468 A88.5 8.5 0 0 0 452 468 L509 330 C512.5 320,515 312,517 305 C519 299,520.5 293,520.8 287.5 C521 278,520.8 266,520.3 256.3 C520 252.5,518.8 249.8,517.3 248 L466.5 193 Z" fill="#0a880a"/>
<g clip-path="url(#bodyclip)">
<g><rect x="259.0" y="193" width="208.4" height="2.3" fill="url(#gA)"/><rect x="257.0" y="195" width="212.2" height="2.3" fill="url(#gA)"/><rect x="255.0" y="197" width="216.1" height="2.3" fill="url(#gA)"/><rect x="253.1" y="199" width="219.9" height="2.3" fill="url(#gA)"/><rect x="251.1" y="201" width="223.7" height="2.3" fill="url(#gA)"/><rect x="249.1" y="203" width="227.6" height="2.3" fill="url(#gA)"/><rect x="247.1" y="205" width="231.4" height="2.3" fill="url(#gA)"/><rect x="245.1" y="207" width="235.2" height="2.3" fill="url(#gA)"/><rect x="243.2" y="209" width="239.0" height="2.3" fill="url(#gA)"/><rect x="241.2" y="211" width="242.9" height="2.3" fill="url(#gA)"/><rect x="239.2" y="213" width="246.7" height="2.3" fill="url(#gA)"/><rect x="237.2" y="215" width="250.5" height="2.3" fill="url(#gA)"/><rect x="235.2" y="217" width="254.4" height="2.3" fill="url(#gA)"/><rect x="233.2" y="219" width="258.2" height="2.3" fill="url(#gA)"/><rect x="231.3" y="221" width="262.0" height="2.3" fill="url(#gA)"/><rect x="229.3" y="223" width="265.9" height="2.3" fill="url(#gA)"/><rect x="227.3" y="225" width="269.7" height="2.3" fill="url(#gA)"/><rect x="225.3" y="227" width="273.5" height="2.3" fill="url(#gA)"/><rect x="223.3" y="229" width="277.3" height="2.3" fill="url(#gA)"/><rect x="221.4" y="231" width="281.2" height="2.3" fill="url(#gA)"/><rect x="219.4" y="233" width="285.0" height="2.3" fill="url(#gA)"/><rect x="217.4" y="235" width="288.8" height="2.3" fill="url(#gA)"/><rect x="215.4" y="237" width="292.7" height="2.3" fill="url(#gA)"/><rect x="213.4" y="239" width="296.5" height="2.3" fill="url(#gA)"/><rect x="211.4" y="241" width="300.3" height="2.3" fill="url(#gA)"/><rect x="209.5" y="243" width="304.1" height="2.3" fill="url(#gA)"/><rect x="207.5" y="245" width="308.0" height="2.3" fill="url(#gA)"/><rect x="205.5" y="247" width="311.8" height="2.3" fill="url(#gA)"/><rect x="205.5" y="247" width="311.8" height="2.3" fill="url(#gB)" opacity="0.00"/><rect x="204.1" y="249" width="314.5" height="2.3" fill="url(#gA)"/><rect x="204.1" y="249" width="314.5" height="2.3" fill="url(#gB)" opacity="0.07"/><rect x="203.3" y="251" width="316.2" height="2.3" fill="url(#gA)"/><rect x="203.3" y="251" width="316.2" height="2.3" fill="url(#gB)" opacity="0.26"/><rect x="202.8" y="253" width="317.2" height="2.3" fill="url(#gA)"/><rect x="202.8" y="253" width="317.2" height="2.3" fill="url(#gB)" opacity="0.50"/><rect x="202.6" y="255" width="317.7" height="2.3" fill="url(#gA)"/><rect x="202.6" y="255" width="317.7" height="2.3" fill="url(#gB)" opacity="0.74"/><rect x="202.5" y="257" width="317.8" height="2.3" fill="url(#gA)"/><rect x="202.5" y="257" width="317.8" height="2.3" fill="url(#gB)" opacity="0.93"/><rect x="202.5" y="259" width="318.0" height="2.3" fill="url(#gB)"/><rect x="202.5" y="261" width="318.1" height="2.3" fill="url(#gB)"/><rect x="202.5" y="263" width="318.2" height="2.3" fill="url(#gB)"/><rect x="202.5" y="265" width="318.2" height="2.3" fill="url(#gB)"/><rect x="202.5" y="267" width="318.2" height="2.3" fill="url(#gB)"/><rect x="202.6" y="269" width="318.2" height="2.3" fill="url(#gB)"/><rect x="202.6" y="271" width="318.2" height="2.3" fill="url(#gB)"/><rect x="202.7" y="273" width="318.1" height="2.3" fill="url(#gB)"/><rect x="202.7" y="273" width="318.1" height="2.3" fill="url(#gC)" opacity="0.00"/><rect x="202.8" y="275" width="318.1" height="2.3" fill="url(#gB)"/><rect x="202.8" y="275" width="318.1" height="2.3" fill="url(#gC)" opacity="0.01"/><rect x="202.9" y="277" width="317.9" height="2.3" fill="url(#gB)"/><rect x="202.9" y="277" width="317.9" height="2.3" fill="url(#gC)" opacity="0.06"/><rect x="203.1" y="279" width="317.8" height="2.3" fill="url(#gB)"/><rect x="203.1" y="279" width="317.8" height="2.3" fill="url(#gC)" opacity="0.12"/><rect x="203.3" y="281" width="317.6" height="2.3" fill="url(#gB)"/><rect x="203.3" y="281" width="317.6" height="2.3" fill="url(#gC)" opacity="0.20"/><rect x="203.6" y="283" width="317.3" height="2.3" fill="url(#gB)"/><rect x="203.6" y="283" width="317.3" height="2.3" fill="url(#gC)" opacity="0.29"/><rect x="203.9" y="285" width="317.0" height="2.3" fill="url(#gB)"/><rect x="203.9" y="285" width="317.0" height="2.3" fill="url(#gC)" opacity="0.39"/><rect x="204.2" y="287" width="316.6" height="2.3" fill="url(#gB)"/><rect x="204.2" y="287" width="316.6" height="2.3" fill="url(#gC)" opacity="0.50"/><rect x="204.6" y="289" width="316.0" height="2.3" fill="url(#gB)"/><rect x="204.6" y="289" width="316.0" height="2.3" fill="url(#gC)" opacity="0.61"/><rect x="205.0" y="291" width="315.3" height="2.3" fill="url(#gB)"/><rect x="205.0" y="291" width="315.3" height="2.3" fill="url(#gC)" opacity="0.71"/><rect x="205.5" y="293" width="314.5" height="2.3" fill="url(#gB)"/><rect x="205.5" y="293" width="314.5" height="2.3" fill="url(#gC)" opacity="0.80"/><rect x="206.0" y="295" width="313.5" height="2.3" fill="url(#gB)"/><rect x="206.0" y="295" width="313.5" height="2.3" fill="url(#gC)" opacity="0.88"/><rect x="206.6" y="297" width="312.5" height="2.3" fill="url(#gB)"/><rect x="206.6" y="297" width="312.5" height="2.3" fill="url(#gC)" opacity="0.94"/><rect x="207.2" y="299" width="311.4" height="2.3" fill="url(#gB)"/><rect x="207.2" y="299" width="311.4" height="2.3" fill="url(#gC)" opacity="0.99"/><rect x="207.8" y="301" width="310.1" height="2.3" fill="url(#gC)"/><rect x="208.5" y="303" width="308.8" height="2.3" fill="url(#gC)"/><rect x="209.1" y="305" width="307.6" height="2.3" fill="url(#gC)"/><rect x="209.8" y="307" width="306.3" height="2.3" fill="url(#gC)"/><rect x="210.5" y="309" width="305.1" height="2.3" fill="url(#gC)"/><rect x="211.2" y="311" width="303.8" height="2.3" fill="url(#gC)"/><rect x="211.9" y="313" width="302.5" height="2.3" fill="url(#gC)"/><rect x="212.6" y="315" width="301.1" height="2.3" fill="url(#gC)"/><rect x="213.3" y="317" width="299.7" height="2.3" fill="url(#gC)"/><rect x="214.1" y="319" width="298.3" height="2.3" fill="url(#gC)"/><rect x="214.8" y="321" width="296.9" height="2.3" fill="url(#gC)"/><rect x="215.6" y="323" width="295.5" height="2.3" fill="url(#gC)"/><rect x="216.4" y="325" width="294.0" height="2.3" fill="url(#gC)"/><rect x="217.2" y="327" width="292.5" height="2.3" fill="url(#gC)"/><rect x="218.0" y="329" width="291.0" height="2.3" fill="url(#gC)"/><rect x="218.8" y="331" width="289.3" height="2.3" fill="url(#gC)"/><rect x="219.7" y="333" width="287.7" height="2.3" fill="url(#gC)"/><rect x="220.5" y="335" width="286.0" height="2.3" fill="url(#gC)"/><rect x="221.3" y="337" width="284.4" height="2.3" fill="url(#gC)"/><rect x="222.1" y="339" width="282.7" height="2.3" fill="url(#gC)"/><rect x="223.0" y="341" width="281.1" height="2.3" fill="url(#gC)"/><rect x="223.8" y="343" width="279.4" height="2.3" fill="url(#gC)"/><rect x="224.6" y="345" width="277.8" height="2.3" fill="url(#gC)"/><rect x="225.4" y="347" width="276.1" height="2.3" fill="url(#gC)"/><rect x="226.3" y="349" width="274.5" height="2.3" fill="url(#gC)"/><rect x="227.1" y="351" width="272.8" height="2.3" fill="url(#gC)"/><rect x="227.9" y="353" width="271.2" height="2.3" fill="url(#gC)"/><rect x="228.7" y="355" width="269.5" height="2.3" fill="url(#gC)"/><rect x="229.6" y="357" width="267.9" height="2.3" fill="url(#gC)"/><rect x="230.4" y="359" width="266.2" height="2.3" fill="url(#gC)"/><rect x="231.2" y="361" width="264.6" height="2.3" fill="url(#gC)"/><rect x="232.0" y="363" width="262.9" height="2.3" fill="url(#gC)"/><rect x="232.9" y="365" width="261.3" height="2.3" fill="url(#gC)"/><rect x="233.7" y="367" width="259.6" height="2.3" fill="url(#gC)"/><rect x="234.5" y="369" width="258.0" height="2.3" fill="url(#gC)"/><rect x="235.3" y="371" width="256.3" height="2.3" fill="url(#gC)"/><rect x="236.2" y="373" width="254.7" height="2.3" fill="url(#gC)"/><rect x="237.0" y="375" width="253.0" height="2.3" fill="url(#gC)"/><rect x="237.8" y="377" width="251.3" height="2.3" fill="url(#gC)"/><rect x="238.7" y="379" width="249.7" height="2.3" fill="url(#gC)"/><rect x="239.5" y="381" width="248.0" height="2.3" fill="url(#gC)"/><rect x="240.3" y="383" width="246.4" height="2.3" fill="url(#gC)"/><rect x="241.1" y="385" width="244.7" height="2.3" fill="url(#gC)"/><rect x="242.0" y="387" width="243.1" height="2.3" fill="url(#gC)"/><rect x="242.8" y="389" width="241.4" height="2.3" fill="url(#gC)"/><rect x="243.6" y="391" width="239.8" height="2.3" fill="url(#gC)"/><rect x="244.4" y="393" width="238.1" height="2.3" fill="url(#gC)"/><rect x="245.3" y="395" width="236.5" height="2.3" fill="url(#gC)"/><rect x="246.1" y="397" width="234.8" height="2.3" fill="url(#gC)"/><rect x="246.9" y="399" width="233.2" height="2.3" fill="url(#gC)"/><rect x="247.7" y="401" width="231.5" height="2.3" fill="url(#gC)"/><rect x="248.6" y="403" width="229.9" height="2.3" fill="url(#gC)"/><rect x="249.4" y="405" width="228.2" height="2.3" fill="url(#gC)"/><rect x="250.2" y="407" width="226.6" height="2.3" fill="url(#gC)"/><rect x="251.0" y="409" width="224.9" height="2.3" fill="url(#gC)"/><rect x="251.9" y="411" width="223.3" height="2.3" fill="url(#gC)"/><rect x="252.7" y="413" width="221.6" height="2.3" fill="url(#gC)"/><rect x="253.5" y="415" width="220.0" height="2.3" fill="url(#gC)"/><rect x="254.3" y="417" width="218.3" height="2.3" fill="url(#gC)"/><rect x="255.2" y="419" width="216.7" height="2.3" fill="url(#gC)"/><rect x="256.0" y="421" width="215.0" height="2.3" fill="url(#gC)"/><rect x="256.8" y="423" width="213.3" height="2.3" fill="url(#gC)"/><rect x="257.7" y="425" width="211.7" height="2.3" fill="url(#gC)"/><rect x="258.5" y="427" width="210.0" height="2.3" fill="url(#gC)"/><rect x="259.3" y="429" width="208.4" height="2.3" fill="url(#gC)"/><rect x="260.1" y="431" width="206.7" height="2.3" fill="url(#gC)"/><rect x="261.0" y="433" width="205.1" height="2.3" fill="url(#gC)"/><rect x="261.8" y="435" width="203.4" height="2.3" fill="url(#gC)"/><rect x="262.6" y="437" width="201.8" height="2.3" fill="url(#gC)"/><rect x="263.4" y="439" width="200.1" height="2.3" fill="url(#gC)"/><rect x="264.3" y="441" width="198.5" height="2.3" fill="url(#gC)"/><rect x="265.1" y="443" width="196.8" height="2.3" fill="url(#gC)"/><rect x="265.9" y="445" width="195.2" height="2.3" fill="url(#gC)"/><rect x="266.7" y="447" width="193.5" height="2.3" fill="url(#gC)"/><rect x="267.6" y="449" width="191.9" height="2.3" fill="url(#gC)"/><rect x="268.4" y="451" width="190.2" height="2.3" fill="url(#gC)"/><rect x="269.2" y="453" width="188.6" height="2.3" fill="url(#gC)"/><rect x="270.0" y="455" width="186.9" height="2.3" fill="url(#gC)"/><rect x="270.9" y="457" width="185.3" height="2.3" fill="url(#gC)"/><rect x="271.7" y="459" width="183.6" height="2.3" fill="url(#gC)"/><rect x="272.5" y="461" width="182.0" height="2.3" fill="url(#gC)"/><rect x="273.3" y="463" width="180.3" height="2.3" fill="url(#gC)"/><rect x="274.2" y="465" width="178.7" height="2.3" fill="url(#gC)"/><rect x="275.0" y="467" width="177.0" height="2.3" fill="url(#gC)"/><rect x="277.5" y="469" width="172.0" height="2.3" fill="url(#gC)"/><rect x="285.4" y="471" width="156.2" height="2.3" fill="url(#gC)"/><rect x="300.8" y="473" width="125.4" height="2.3" fill="url(#gC)"/><rect x="333.6" y="475" width="59.8" height="2.3" fill="url(#gC)"/></g>
<rect x="195" y="180" width="340" height="300" fill="url(#gv)"/>
<rect x="195" y="255" width="340" height="26" fill="url(#hl)"/>
<g fill="none" stroke="#5f6638" stroke-width="0.7" opacity="0.6">
<path d="M330.5 200 V481"/><path d="M363.5 200 V450"/><path d="M396.5 200 V470"/>
<path d="M275 450.8 H460"/><path d="M275 469.5 H452"/>
</g>
<g fill="none" stroke="#7a6a30" stroke-width="0.8" opacity="0.75">
<path d="M363.8 450 V467.3 L397.5 454.4 M363.8 467.3 L343 481"/>
</g>
</g>
<!-- rim -->
<ellipse cx="362.7" cy="192" rx="105.3" ry="10.4" fill="url(#rim)"/>
<path d="M257.4 192 A105.3 10.4 0 0 1 468 192" fill="none" stroke="#7c828e" stroke-width="0.6"/>
<ellipse cx="367.5" cy="192.6" rx="93.5" ry="8.1" fill="#9ba1ad"/>
<g clip-path="url(#holeclip)">
<ellipse cx="367.5" cy="196.2" rx="93.5" ry="8.1" fill="#8c929e" stroke="#a9aeb9" stroke-width="0.6"/>
<ellipse cx="377" cy="197" rx="78" ry="5.2" fill="#757b87"/>
</g>
<path d="M274 192.6 A93.5 8.1 0 0 1 461 192.6" fill="none" stroke="#b4b9c3" stroke-width="0.5"/>
<g fill="none" stroke="#5d5a60" stroke-width="0.7"><path d="M337.5 201.4 L396.5 173.3 V201"/></g>
<text x="356.5" y="446.5" font-size="6.2" fill="#123a12" font-family="Liberation Sans, sans-serif">Y</text>
<text x="353.5" y="475" font-size="6.2" fill="#0e2e0e" font-family="Liberation Sans, sans-serif">Z</text>
<text x="383.5" y="475.5" font-size="6.2" fill="#0e2e0e" font-family="Liberation Sans, sans-serif">X</text>
<text x="367.5" y="465.2" font-size="5.6" fill="#6e9650" font-family="Liberation Sans, sans-serif" textLength="52" lengthAdjust="spacingAndGlyphs">PRT_CSYS_DEF</text>
</svg>
<span class="t " style="left:537.3px;top:166.9px;font-size:14.9px;line-height:19.4px;color:#e43a40;">1.打钩确定退出草绘及</span>
<span class="t " style="left:537.3px;top:186.9px;font-size:14.9px;line-height:19.4px;color:#e43a40;">旋转命令，生成主特</span>
<span class="t " style="left:537.3px;top:206.9px;font-size:14.9px;line-height:19.4px;color:#e43a40;">征。点击表面是否为一</span>
<span class="t " style="left:537.3px;top:226.9px;font-size:14.9px;line-height:19.4px;color:#e43a40;">个面，如不是，说明转</span>
<span class="t " style="left:537.3px;top:246.9px;font-size:14.9px;line-height:19.4px;color:#e43a40;">化为样条时没有操作成</span>
<span class="t " style="left:537.3px;top:266.9px;font-size:14.9px;line-height:19.4px;color:#e43a40;">功，可以返回旋转草绘</span>
<span class="t " style="left:537.3px;top:286.9px;font-size:14.9px;line-height:19.4px;color:#e43a40;">命令再编辑。</span>
<span class="t " style="left:476.5px;top:448.2px;font-size:17.9px;line-height:23.3px;color:#ffffff;text-shadow:0 0 1px #000,0.6px 0.6px 1px #000,-0.5px -0.5px 1px #333,1px 1px 2px rgba(0,0,0,.7);">头条 @Creo产品结构设计</span>
</div></body></html>
